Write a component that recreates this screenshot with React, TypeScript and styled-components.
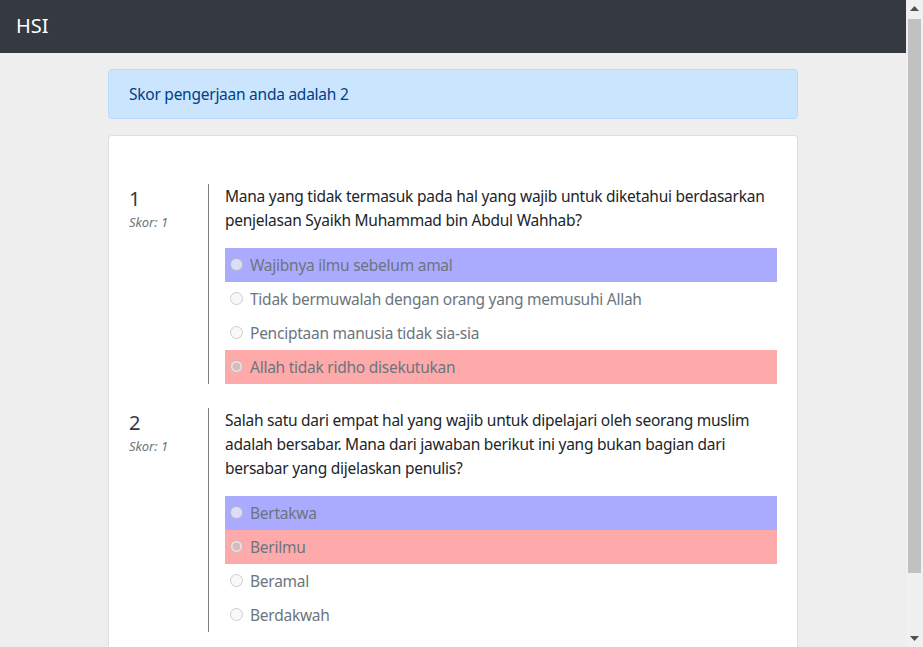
import styled, { createGlobalStyle } from "styled-components";

type Tone = "correct" | "wrong" | "none";

interface QuestionData {
  no: number;
  score: number;
  text: string;
  options: string[];
  correct: string;
  answer: string;
}

const questions: QuestionData[] = [
  {
    no: 1,
    score: 1,
    text: "Mana yang tidak termasuk pada hal yang wajib untuk diketahui berdasarkan penjelasan Syaikh Muhammad bin Abdul Wahhab?",
    options: [
      "Wajibnya ilmu sebelum amal",
      "Tidak bermuwalah dengan orang yang memusuhi Allah",
      "Penciptaan manusia tidak sia-sia",
      "Allah tidak ridho disekutukan",
    ],
    correct: "Wajibnya ilmu sebelum amal",
    answer: "Allah tidak ridho disekutukan",
  },
  {
    no: 2,
    score: 1,
    text: "Salah satu dari empat hal yang wajib untuk dipelajari oleh seorang muslim adalah bersabar. Mana dari jawaban berikut ini yang bukan bagian dari bersabar yang dijelaskan penulis?",
    options: ["Bertakwa", "Berilmu", "Beramal", "Berdakwah"],
    correct: "Bertakwa",
    answer: "Berilmu",
  },
];

function toneOf(q: QuestionData, item: string): Tone {
  if (q.answer === item && q.correct !== item) return "wrong";
  if (q.correct === item) return "correct";
  return "none";
}

function App() {
  return (
    <>
      <GlobalStyle />
      <Viewport>
        <Page>
          <Navbar>
            <Brand>HSI</Brand>
          </Navbar>
          <Container>
            <Alert>Skor pengerjaan anda adalah 2</Alert>
            <Card>
              {questions.map((q) => (
                <Question key={q.no}>
                  <Meta>
                    <Number>{q.no}</Number>
                    <Score>Skor: {q.score}</Score>
                  </Meta>
                  <Body>
                    <Prompt>{q.text}</Prompt>
                    {q.options.map((item) => (
                      <Option key={item} $tone={toneOf(q, item)}>
                        <Radio
                          type="radio"
                          name={`q${q.no}`}
                          checked={q.answer === item}
                          readOnly
                          disabled
                        />
                        <span>{item}</span>
                      </Option>
                    ))}
                  </Body>
                </Question>
              ))}
            </Card>
          </Container>
        </Page>
        <Scrollbar>
          <Arrow>
            <svg width="9" height="5" viewBox="0 0 9 5">
              <path d="M0 5 L4.5 0 L9 5 Z" fill="#505050" />
            </svg>
          </Arrow>
          <Track>
            <Thumb />
          </Track>
          <Arrow>
            <svg width="9" height="5" viewBox="0 0 9 5">
              <path d="M0 0 L4.5 5 L9 0 Z" fill="#505050" />
            </svg>
          </Arrow>
        </Scrollbar>
      </Viewport>
    </>
  );
}

const GlobalStyle = createGlobalStyle`
  html, body {
    height: 100%;
    overflow: hidden;
  }
  body {
    margin: 0;
    background-color: #eeeeee;
    color: #212529;
    font-family: "Noto Sans", "Open Sans", sans-serif;
    font-size: 15.5px;
    letter-spacing: -0.25px;
    line-height: 24px;
  }
`;

const Viewport = styled.div`
  display: flex;
  height: 100vh;
`;

const Page = styled.div`
  flex: 1;
  min-width: 0;
  overflow-y: auto;
  scrollbar-width: none;
`;

const Scrollbar = styled.div`
  display: flex;
  flex-direction: column;
  width: 17px;
  flex-shrink: 0;
  background-color: #f0f0f0;
`;

const Arrow = styled.div`
  display: flex;
  align-items: center;
  justify-content: center;
  height: 17px;
  flex-shrink: 0;
`;

const Track = styled.div`
  flex: 1;
  padding: 2px 2px 0;
`;

const Thumb = styled.div`
  height: 554px;
  background-color: #c1c1c1;
`;

const Navbar = styled.nav`
  display: flex;
  align-items: center;
  height: 53px;
  padding: 0 16px;
  background-color: #343a40;
`;

const Brand = styled.span`
  color: #fff;
  font-size: 20px;
  line-height: 30px;
  letter-spacing: 0;
  padding-bottom: 1px;
`;

const Container = styled.main`
  max-width: 690px;
  margin: 0 auto;
  padding: 16px 15px 59px;
`;

const Alert = styled.div`
  padding: 12px 20px;
  margin-bottom: 16px;
  color: #004085;
  background-color: #cce5ff;
  border: 1px solid #b8daff;
  border-radius: 4px;
`;

const Card = styled.section`
  display: flex;
  flex-direction: column;
  gap: 24px;
  padding: 48px 20px 24px;
  background-color: #fff;
  border: 1px solid rgba(0, 0, 0, 0.125);
  border-radius: 4px;
`;

const Question = styled.div`
  display: flex;
`;

const Meta = styled.div`
  width: 79px;
  flex-shrink: 0;
  padding-top: 3px;
`;

const Number = styled.div`
  font-size: 20px;
  line-height: 24px;
  letter-spacing: 0;
  color: #343a40;
`;

const Score = styled.div`
  margin-top: 3px;
  font-size: 13px;
  line-height: 16px;
  letter-spacing: 0;
  font-style: italic;
  color: #6c757d;
`;

const Body = styled.div`
  flex: 1;
  border-left: 1px solid #808080;
  padding-left: 16px;
`;

const Prompt = styled.p`
  margin: 0 0 16px;
`;

const Option = styled.label<{ $tone: Tone }>`
  display: flex;
  align-items: center;
  height: 34px;
  padding-left: 5px;
  color: #6c757d;
  background-color: ${(p) =>
    p.$tone === "correct" ? "#aaaaff" : p.$tone === "wrong" ? "#ffaaaa" : "transparent"};
`;

const Radio = styled.input`
  width: 13px;
  height: 13px;
  margin: 0 7px 2px 0;
`;

export default App;
